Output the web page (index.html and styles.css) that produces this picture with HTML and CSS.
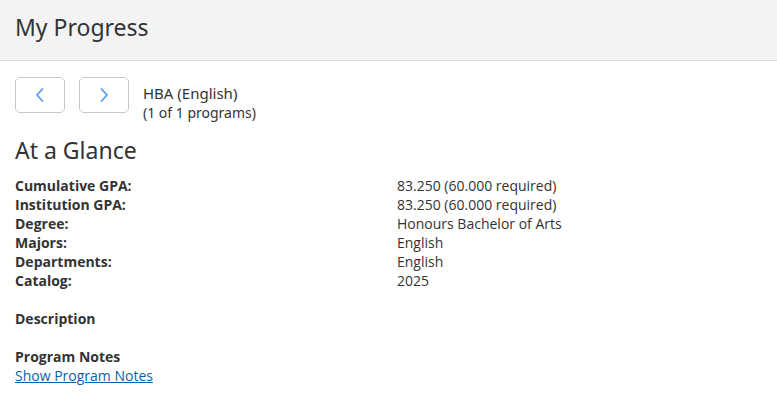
FILE: index.html
```html
<!DOCTYPE html>
<html>
<head>
<meta charset="utf-8">
<link rel="stylesheet" href="styles.css">
</head>
<body>
<header class="page-header">
  <h1 class="page-title">My Progress</h1>
</header>
<main class="content">
  <div class="program-nav">
    <button class="nav-btn" aria-label="Previous">
      <svg width="12" height="16" viewBox="0 0 12 16"><path d="M9 1.5 L3 8 L9 14.5" fill="none" stroke="#4a96e6" stroke-width="1.6"/></svg>
    </button>
    <button class="nav-btn" aria-label="Next">
      <svg width="12" height="16" viewBox="0 0 12 16"><path d="M3 1.5 L9 8 L3 14.5" fill="none" stroke="#4a96e6" stroke-width="1.6"/></svg>
    </button>
    <div class="program-info">
      <div class="program-name">HBA (English)</div>
      <div class="program-count">(1 of 1 programs)</div>
    </div>
  </div>
  <h2 class="section-title">At a Glance</h2>
  <dl class="glance">
    <dt>Cumulative GPA:</dt><dd>83.250 (60.000 required)</dd>
    <dt>Institution GPA:</dt><dd>83.250 (60.000 required)</dd>
    <dt>Degree:</dt><dd>Honours Bachelor of Arts</dd>
    <dt>Majors:</dt><dd>English</dd>
    <dt>Departments:</dt><dd>English</dd>
    <dt>Catalog:</dt><dd>2025</dd>
  </dl>
  <div class="block">
    <div class="block-title">Description</div>
  </div>
  <div class="block">
    <div class="block-title">Program Notes</div>
    <a class="link" href="#">Show Program Notes</a>
  </div>
</main>
</body>
</html>
```
FILE: styles.css
```css
body {
  margin: 0;
  font-family: "Open Sans", "Liberation Sans", sans-serif;
  color: #333;
  background: #fff;
}
.page-header {
  background: #f3f3f3;
  border-bottom: 1px solid #dcdcdc;
  height: 61px;
  box-sizing: border-box;
  padding: 0 15px;
  display: flex;
  align-items: center;
}
.page-title {
  margin: 0;
  font-family: "Noto Sans", "Open Sans", sans-serif;
  font-weight: 400;
  font-size: 23px;
  color: #333;
  position: relative;
  top: -3px;
}
.content {
  padding: 16px 15px 0;
}
.program-nav {
  display: flex;
  align-items: flex-start;
}
.nav-btn {
  width: 50px;
  height: 36px;
  border: 1px solid #c8c8c8;
  border-radius: 5px;
  background: #fff;
  margin-right: 14px;
  display: flex;
  align-items: center;
  justify-content: center;
  padding: 0;
}
.program-info {
  padding-top: 6px;
}
.program-name {
  font-family: "Noto Sans", "Open Sans", sans-serif;
  font-size: 15px;
  line-height: 20px;
  color: #333;
}
.program-count {
  font-family: "Noto Sans", "Open Sans", sans-serif;
  font-size: 14px;
  line-height: 20px;
  color: #333;
}
.section-title {
  margin: 13px 0 12px;
  font-family: "Noto Sans", "Open Sans", sans-serif;
  font-weight: 400;
  font-size: 23px;
  line-height: 28px;
  color: #333;
}
.glance {
  display: grid;
  grid-template-columns: 382px 1fr;
  margin: 0;
  font-size: 14px;
  line-height: 19px;
}
.glance dt {
  font-weight: 700;
}
.glance dd {
  margin: 0;
}
.block {
  margin-top: 19px;
  font-size: 14px;
  line-height: 19px;
}
.block-title {
  font-weight: 700;
}
.link {
  color: #0a5fa6;
  text-decoration: underline;
}
```
